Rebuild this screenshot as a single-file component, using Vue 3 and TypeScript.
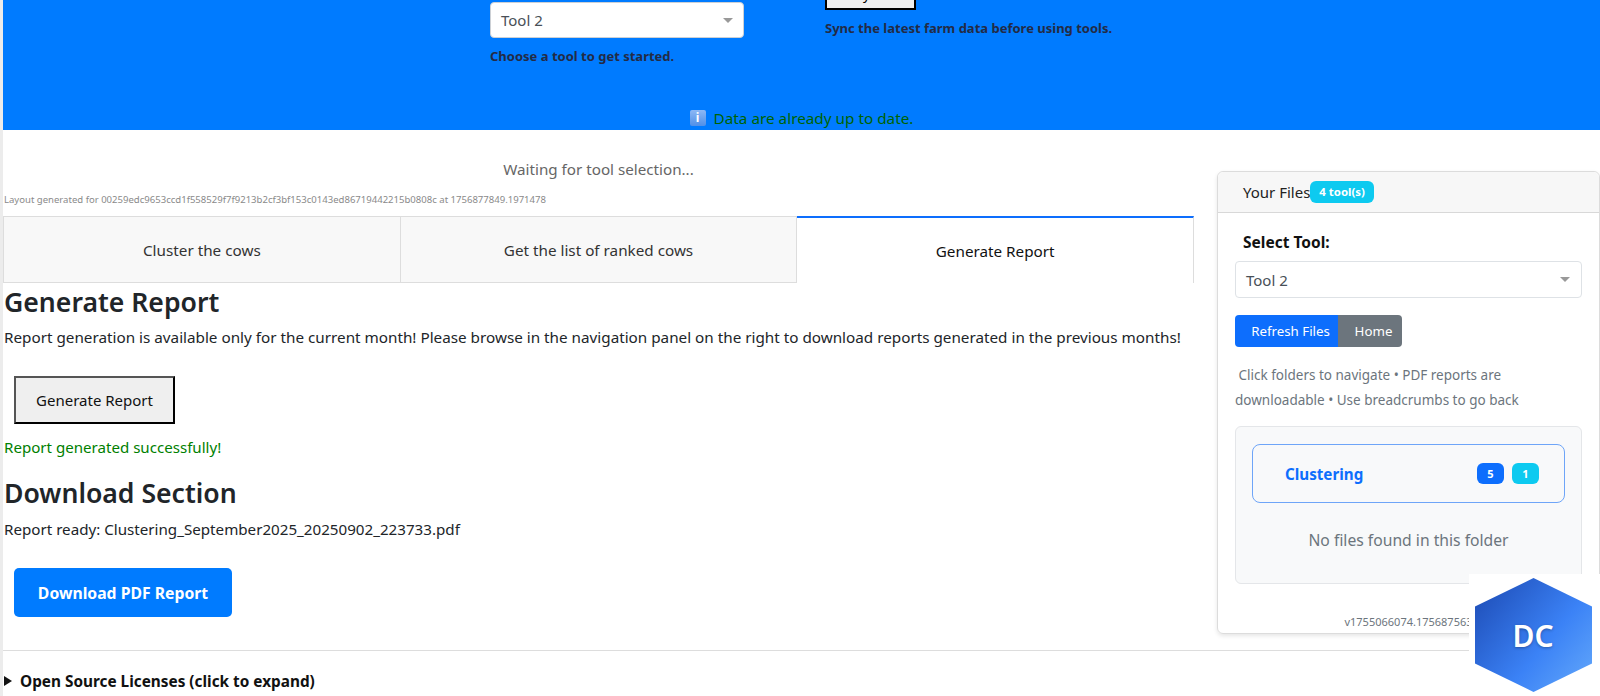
<script setup lang="ts">
const tabs: string[] = ['Cluster the cows', 'Get the list of ranked cows', 'Generate Report']
const activeTab = 2
</script>

<template>
  <div class="page">
    <header class="band">
      <div class="controls">
        <div class="tool-col">
          <div class="select select-top"><span>Tool 2</span><i class="caret"></i></div>
          <p class="help">Choose a tool to get started.</p>
        </div>
        <div class="sync-col">
          <button class="sync-btn">Sync</button>
          <p class="help sync-help">Sync the latest farm data before using tools.</p>
        </div>
      </div>
      <div class="status"><span class="info">i</span><span class="status-text">Data are already up to date.</span></div>
    </header>

    <div class="columns">
      <main class="left">
        <div class="waiting">Waiting for tool selection...</div>
        <div class="layout-note">Layout generated for 00259edc9653ccd1f558529f7f9213b2cf3bf153c0143ed86719442215b0808c at 1756877849.1971478</div>
        <div class="tabs">
          <div v-for="(t, i) in tabs" :key="t" class="tab" :class="{ active: i === activeTab }">{{ t }}</div>
        </div>
        <h2 class="h-report">Generate Report</h2>
        <p class="para">Report generation is available only for the current month! Please browse in the navigation panel on the right to download reports generated in the previous months!</p>
        <button class="gen-btn">Generate Report</button>
        <p class="success">Report generated successfully!</p>
        <h2 class="h-download">Download Section</h2>
        <p class="para ready">Report ready: Clustering_September2025_20250902_223733.pdf</p>
        <button class="dl-btn">Download PDF Report</button>
      </main>

      <aside class="card">
        <div class="card-head"><span>Your Files</span><span class="pill">4 tool(s)</span></div>
        <div class="card-body">
          <label class="sel-label">Select Tool:</label>
          <div class="select select-side"><span>Tool 2</span><i class="caret"></i></div>
          <div class="btn-group">
            <button class="b-refresh">Refresh Files</button>
            <button class="b-home">Home</button>
          </div>
          <p class="hint">&nbsp;Click folders to navigate • PDF reports are downloadable • Use breadcrumbs to go back</p>
          <div class="browser">
            <div class="folder">
              <span class="folder-name">Clustering</span>
              <span class="count c-blue">5</span>
              <span class="count c-cyan">1</span>
            </div>
            <div class="empty">No files found in this folder</div>
          </div>
          <div class="version">v1755066074.175687563</div>
        </div>
      </aside>
    </div>

    <hr class="rule" />
    <div class="licenses"><span class="tri"></span>Open Source Licenses (click to expand)</div>

    <div class="logo">
      <svg width="117" height="114" viewBox="0 0 117 114">
        <defs>
          <linearGradient id="hexg" x1="0" y1="0.1" x2="1" y2="0.9">
            <stop offset="0" stop-color="#1e4db7" />
            <stop offset="0.6" stop-color="#3b82f6" />
            <stop offset="1" stop-color="#60a5fa" />
          </linearGradient>
        </defs>
        <polygon points="58.5,0 117,28.5 117,85.5 58.5,114 0,85.5 0,28.5" fill="url(#hexg)" />
      </svg>
      <span class="logo-text">DC</span>
    </div>
  </div>
</template>

<style>
html, body { margin: 0; overflow: hidden; }
</style>

<style scoped>
.page {
  position: relative;
  height: 696px;
  overflow: hidden;
  box-sizing: border-box;
  border-left: 3px solid #ececec;
  background: #fff;
  color: #212529;
  font-family: "Noto Sans", "Open Sans", sans-serif;
  font-size: 15px;
}
p { margin: 0; }
button { font-family: inherit; cursor: pointer; }

.band { height: 130px; background: #007bff; display: flex; flex-direction: column; }
.controls { display: flex; padding-left: 487px; gap: 81px; height: 107px; }
.tool-col { width: 254px; padding-top: 2px; }
.select {
  box-sizing: border-box;
  background: #fff;
  border: 1px solid #ccd0d5;
  border-radius: 4px;
  display: flex;
  align-items: center;
  justify-content: space-between;
  color: #495057;
}
.select-top { height: 36px; padding: 0 10px 0 10px; font-size: 15px; }
.caret {
  display: block;
  width: 0;
  height: 0;
  border-left: 5.5px solid transparent;
  border-right: 5.5px solid transparent;
  border-top: 5.5px solid #999;
}
.help { font-size: 13px; font-weight: 700; color: #232b45; line-height: 18px; }
.tool-col .help { margin-top: 9px; }
.sync-btn {
  display: block;
  box-sizing: border-box;
  width: 91px;
  height: 34px;
  margin-top: -24px;
  background: #efefef;
  border: 2px solid #000;
  font-size: 14px;
}
.sync-help { margin-top: 9px; }
.status {
  display: flex;
  justify-content: center;
  align-items: center;
  gap: 8px;
  color: #006400;
  font-size: 15.3px;
  line-height: 22px;
}
.info {
  display: block;
  width: 16px;
  height: 16px;
  line-height: 16px;
  border-radius: 2px;
  background: linear-gradient(180deg, #8db8f5, #4f8fe8);
  color: #fff;
  font-size: 12px;
  font-weight: 700;
  text-align: center;
}

.columns { display: flex; }
.left { width: 1191px; flex: none; }
.waiting { text-align: center; color: #666; font-size: 15.2px; line-height: 22px; padding-top: 28px; }
.layout-note { font-size: 9.55px; color: #8a8a8a; line-height: 14px; margin-top: 13px; padding-left: 1px; }
.tabs { display: flex; margin-top: 9px; height: 67px; }
.tab {
  flex: 1;
  box-sizing: border-box;
  display: flex;
  align-items: center;
  justify-content: center;
  background: #f8f8f8;
  border: 1px solid #ddd;
  border-left: 0;
  font-size: 15.26px;
  color: #333;
}
.tab:first-child { border-left: 1px solid #ddd; }
.tab.active {
  background: #fff;
  border-top: 2px solid #0d6efd;
  border-bottom: 0;
  color: #111;
}
h2 { margin: 0; font-weight: 600; font-size: 26.6px; line-height: 36px; color: #212529; padding-left: 1px; }
.h-report { margin-top: 1px; }
.para { font-size: 15.26px; line-height: 24px; margin-top: 5px; padding-left: 1px; }
.gen-btn {
  display: block;
  box-sizing: border-box;
  margin: 27px 0 0 11px;
  width: 161px;
  height: 48px;
  background: #efefef;
  border: 2px solid #000;
  border-top-color: #555;
  border-left-color: #555;
  font-size: 15px;
  color: #111;
}
.success { color: #008000; font-size: 15.1px; line-height: 22px; margin-top: 12px; padding-left: 1px; }
.h-download { margin-top: 17px; }
.ready { margin-top: 6px; font-size: 15.17px; }
.dl-btn {
  display: block;
  box-sizing: border-box;
  margin: 27px 0 0 11px;
  width: 218px;
  height: 49px;
  border: 0;
  border-radius: 5px;
  background: #007bff;
  color: #fff;
  font-size: 15.75px;
  font-weight: 700;
}

.card {
  box-sizing: border-box;
  width: 383px;
  margin: 41px 0 0 23px;
  height: 463px;
  border: 1px solid #dcdcdc;
  border-radius: 6px;
  box-shadow: 0 2px 4px rgba(0, 0, 0, 0.1);
  flex: none;
}
.card-head {
  height: 41px;
  box-sizing: border-box;
  background: #f7f7f7;
  border-bottom: 1px solid #d8d8d8;
  border-radius: 6px 6px 0 0;
  padding-left: 25px;
  display: flex;
  align-items: center;
  font-size: 15px;
  color: #222;
}
.pill {
  background: #0dcaf0;
  color: #fff;
  font-size: 11.4px;
  font-weight: 700;
  border-radius: 6px;
  padding: 0 9px;
  line-height: 22px;
}
.card-body { padding: 0 17px; }
.sel-label { display: block; margin: 18px 0 0 8px; font-weight: 700; font-size: 15.5px; line-height: 22px; color: #111; }
.select-side { margin-top: 8px; height: 37px; padding: 0 11px 0 10px; font-size: 15px; border-color: #dee2e6; }
.btn-group { display: flex; margin-top: 17px; height: 32px; }
.btn-group button { border: 0; color: #fff; font-size: 13.3px; padding: 0; }
.b-refresh { width: 103px; padding-left: 8px !important; background: #0d6efd; border-radius: 4px 0 0 4px !important; }
.b-home { width: 64px; padding-left: 7px !important; background: #6c757d; border-radius: 0 4px 4px 0 !important; }
.hint { margin-top: 16px; font-size: 13.5px; line-height: 25px; color: #6c757d; }
.browser {
  box-sizing: border-box;
  height: 158px;
  margin-top: 13px;
  padding: 17px 16px 0;
  background: #f8f9fa;
  border: 1px solid #e4e6e9;
  border-radius: 6px;
}
.folder {
  box-sizing: border-box;
  height: 59px;
  border: 1px solid #6ea5f8;
  border-radius: 8px;
  display: flex;
  align-items: center;
  padding-left: 32px;
  padding-right: 25px;
}
.folder-name { color: #0d6efd; font-weight: 700; font-size: 15.2px; margin-right: auto; }
.count {
  width: 27px;
  height: 21px;
  line-height: 21px;
  border-radius: 6px;
  text-align: center;
  font-size: 11px;
  font-weight: 700;
  color: #fff;
}
.c-blue { background: #0d6efd; margin-right: 8px; }
.c-cyan { background: #0dcaf0; }
.empty { text-align: center; color: #6c757d; font-size: 15.7px; margin-top: 25px; line-height: 24px; }
.version { text-align: center; font-size: 11px; color: #6c757d; line-height: 14px; margin-top: 31px; }

.rule { margin: 16px 0 0; border: 0; border-top: 1px solid #ddd; }
.licenses { margin-top: 20px; padding-left: 1px; font-weight: 700; font-size: 15.35px; line-height: 20px; color: #111; display: flex; align-items: center; }
.tri {
  width: 0;
  height: 0;
  border-top: 5px solid transparent;
  border-bottom: 5px solid transparent;
  border-left: 8px solid #111;
  margin: 0 8px 0 0;
}

.logo {
  position: absolute;
  right: 0;
  bottom: 0;
  width: 131px;
  height: 122px;
  box-sizing: border-box;
  padding-right: 3px;
  background: #fff;
  display: flex;
  align-items: center;
  justify-content: center;
}
.logo svg { display: block; }
.logo-text {
  position: absolute;
  left: 0;
  right: 3px;
  text-align: center;
  color: #fff;
  font-size: 30px;
  font-weight: 600;
  text-shadow: 0 1px 3px rgba(0, 0, 0, 0.3);
}
</style>
